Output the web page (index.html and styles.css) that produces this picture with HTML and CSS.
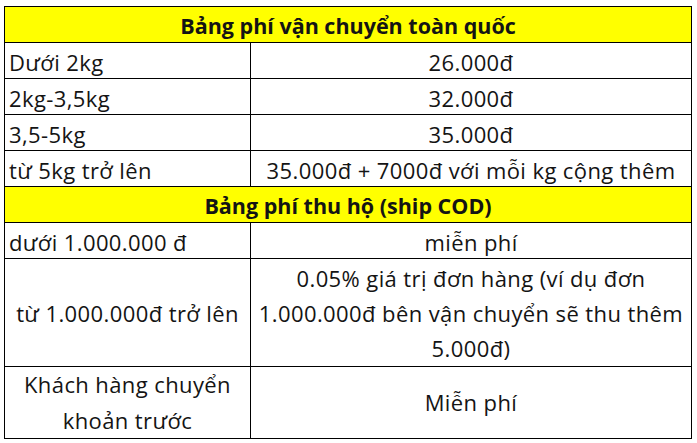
FILE: index.html
```html
<!DOCTYPE html>
<html lang="vi">
<head>
<meta charset="utf-8">
<title>Bảng phí vận chuyển</title>
<link rel="stylesheet" href="styles.css">
</head>
<body>
<table class="fees">
  <colgroup><col class="c1"><col class="c2"></colgroup>
  <tr class="head"><th colspan="2">Bảng phí vận chuyển toàn quốc</th></tr>
  <tr><td class="label">Dưới 2kg</td><td class="val">26.000đ</td></tr>
  <tr><td class="label">2kg-3,5kg</td><td class="val">32.000đ</td></tr>
  <tr><td class="label">3,5-5kg</td><td class="val">35.000đ</td></tr>
  <tr><td class="label">từ 5kg trở lên</td><td class="val">35.000đ + 7000đ với mỗi kg cộng thêm</td></tr>
  <tr class="head"><th colspan="2">Bảng phí thu hộ (ship COD)</th></tr>
  <tr><td class="label">dưới 1.000.000 đ</td><td class="val">miễn phí</td></tr>
  <tr class="tall"><td class="label center">từ 1.000.000đ trở lên</td><td class="val">0.05% giá trị đơn hàng (ví dụ đơn<br>1.000.000đ bên vận chuyển sẽ thu thêm<br>5.000đ)</td></tr>
  <tr class="two"><td class="label center">Khách hàng chuyển<br>khoản trước</td><td class="val">Miễn phí</td></tr>
</table>
</body>
</html>
```
FILE: styles.css
```css
html, body {
  margin: 0;
  padding: 0;
  background: #ffffff;
}
body {
  padding: 6px 0 0 4px;
  font-family: "Open Sans", "Lato", sans-serif;
  color: #141414;
}
.fees {
  border-collapse: collapse;
  table-layout: fixed;
  width: 687px;
  font-size: 22px;
  letter-spacing: 0.4px;
}
.c1 { width: 246px; }
.c2 { width: 441px; }
.fees th, .fees td {
  border: 1px solid #000;
  padding: 3px 4px 0;
  line-height: 32px;
  vertical-align: middle;
  white-space: nowrap;
}
.head th {
  background: #ffff00;
  font-weight: 700;
  font-size: 21.5px;
  letter-spacing: 0;
  text-align: center;
}
.label { text-align: left; }
.label.center { text-align: center; padding-left: 2px; padding-right: 2px; }
.val { text-align: center; }
.fees .tall td { padding-top: 2px; line-height: 35px; }
.fees .two td { padding-top: 0; line-height: 35.5px; }
```
